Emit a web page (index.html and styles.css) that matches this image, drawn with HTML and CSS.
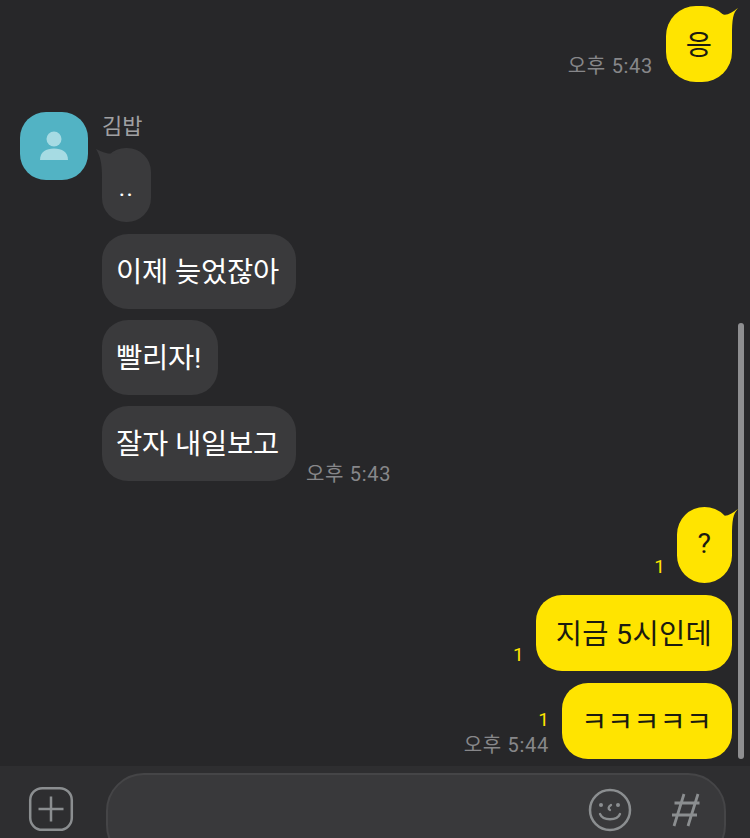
FILE: index.html
```html
<!DOCTYPE html>
<html lang="ko">
<head>
  <meta charset="UTF-8" />
  <title>Chat</title>
  <link rel="stylesheet" href="styles.css">
</head>
<body>
  <div class="chat">
    <div class="scrollbar"></div>

    <!-- my last message -->
    <div class="row mine group-first">
      <span class="time">오후 5:43</span>
      <div class="bubble yellow short tail">
        <svg class="tail-r" width="26" height="30" viewBox="0 0 26 30"><path d="M6 5C12 12 18 8 26 2C21 7 20 13 20 30L0 30Z" fill="#ffe400"/></svg>
        <span class="label">응</span>
      </div>
    </div>

    <!-- friend -->
    <div class="friend">
      <div class="avatar">
        <svg width="30" height="30" viewBox="0 0 30 30"><circle cx="15" cy="8" r="7.5" fill="#a6dbe3"/><path d="M1 29C1 21 7 17.500 15 17.500C23 17.500 29 21 29 29Z" fill="#a6dbe3"/></svg>
      </div>
      <div class="friend-msgs">
        <div class="name">김밥</div>
        <div class="bubble gray dots tail">
          <svg class="tail-l" width="22" height="30" viewBox="0 0 22 30"><path d="M22 5C14 7 8 5 0 1C4 8 6 14 6 30L22 30Z" fill="#3a3a3c"/></svg>
          <span class="label">..</span>
        </div>
        <div class="bubble gray">이제 늦었잖아</div>
        <div class="bubble gray">빨리자!</div>
        <div class="with-time">
          <div class="bubble gray">잘자 내일보고</div>
          <span class="time">오후 5:43</span>
        </div>
      </div>
    </div>

    <!-- my messages -->
    <div class="mine-group">
      <div class="row mine">
        <span class="unread">1</span>
        <div class="bubble yellow short tail">
          <svg class="tail-r" width="26" height="30" viewBox="0 0 26 30"><path d="M6 5C12 12 18 8 26 2C21 7 20 13 20 30L0 30Z" fill="#ffe400"/></svg>
          <span class="label">?</span>
        </div>
      </div>
      <div class="row mine">
        <span class="unread">1</span>
        <div class="bubble yellow">지금 5시인데</div>
      </div>
      <div class="row mine">
        <div class="meta">
          <span class="unread">1</span>
          <span class="time">오후 5:44</span>
        </div>
        <div class="bubble yellow kk">ㅋㅋㅋㅋㅋ</div>
      </div>
    </div>
  </div>

  <div class="inputbar">
    <svg class="plus" width="46" height="46" viewBox="0 0 46 46">
      <rect x="2.200" y="2.200" width="41.600" height="41.600" rx="12" fill="none" stroke="#8b8e90" stroke-width="2.500"/>
      <path d="M23 10.500V35.500M10.500 23H35.500" fill="none" stroke="#8b8e90" stroke-width="2.500"/>
    </svg>
    <div class="inputbox">
      <svg width="44" height="44" viewBox="0 0 44 44">
        <circle cx="22" cy="22" r="20" fill="none" stroke="#8b8e90" stroke-width="2.500"/>
        <circle cx="13" cy="17" r="2" fill="#8b8e90"/>
        <circle cx="30" cy="17" r="2" fill="#8b8e90"/>
        <path d="M23 17C20 19 20 21 22 22M12 26C15 33 29 33 32 26" fill="none" stroke="#8b8e90" stroke-width="2.300" stroke-linecap="round"/>
      </svg>
      <svg class="hash" width="30" height="34" viewBox="0 0 30 34">
        <path d="M13 1L3 33M27 1L17 33M3.500 10H28.500M1 22H26" fill="none" stroke="#8b8e90" stroke-width="2.800"/>
      </svg>
    </div>
  </div>
</body>
</html>
```

FILE: styles.css
```css
* {
  box-sizing: border-box;
}

html, body {
  margin: 0;
  height: 838px;
  overflow: hidden;
}

body {
  background-color: #272729;
  font-family: "Noto Sans CJK KR", "Noto Sans", sans-serif;
  color: #fff;
}

.chat {
  position: relative;
  height: 766px;
  padding: 6px 18px 0 20px;
}

.scrollbar {
  position: absolute;
  right: 6px;
  top: 323px;
  width: 6px;
  height: 436px;
  border-radius: 3px;
  background-color: #8e8e90;
}

.row {
  display: flex;
  justify-content: flex-end;
  align-items: flex-end;
}

.bubble {
  position: relative;
  height: 75px;
  padding: 0 17px 4px 14px;
  display: flex;
  align-items: center;
  justify-content: center;
  border-radius: 26px;
  font-family: Roboto, "Noto Sans CJK KR", sans-serif;
  font-size: 28.500px;
  letter-spacing: -0.2px;
  width: fit-content;
  white-space: nowrap;
}

.label {
  position: relative;
}

.yellow {
  background-color: #ffe400;
  color: #1b1b10;
  height: 76px;
  padding: 0 20px 4px;
  letter-spacing: 0.300px;
}

.gray {
  background-color: #3a3a3c;
}

.short {
  width: 66px;
  height: 76px;
  border-radius: 30px;
  padding: 0 0 4px;
}

.mine-group .short {
  width: 55px;
}

.dots {
  width: 49px;
  height: 74px;
  border-radius: 24px;
  padding: 5px 0 0;
  font-size: 24px;
  letter-spacing: 1.500px;
  margin-top: 4px;
  margin-bottom: 1px;
}

.kk {
  padding: 0 20px 4px 19px;
  letter-spacing: 0;
}

.tail-r {
  position: absolute;
  top: 0;
  right: -6px;
}

.tail-l {
  position: absolute;
  top: 0;
  left: -6px;
}

.time {
  color: #87878a;
  font-family: Roboto, "Noto Sans CJK KR", sans-serif;
  font-size: 20px;
  letter-spacing: 0.700px;
  line-height: 26px;
  white-space: nowrap;
}

.unread {
  color: #ffe400;
  font-family: Roboto, sans-serif;
  font-size: 19px;
  line-height: 24px;
}

.row .time {
  margin: 0 13px 3px 0;
}

.row > .unread {
  margin: 0 12px 4px 0;
}

.meta {
  display: flex;
  flex-direction: column;
  align-items: flex-end;
  margin: 0 13px 1px 0;
}

.meta .unread {
  margin-bottom: 0;
}

.row .meta .time {
  margin: 0;
}

.friend {
  display: flex;
  gap: 14px;
  margin-top: 30px;
}

.avatar {
  width: 68px;
  height: 68px;
  border-radius: 26px;
  background-color: #52b3c4;
  display: flex;
  align-items: center;
  justify-content: center;
}

.friend-msgs {
  display: flex;
  flex-direction: column;
  gap: 11px;
}

.name {
  color: #a0a0a2;
  font-size: 22px;
  line-height: 25px;
  margin-bottom: -4px;
}

.with-time {
  display: flex;
  align-items: flex-end;
  gap: 10px;
}

.with-time .time {
  margin-bottom: -6px;
}

.mine-group {
  display: flex;
  flex-direction: column;
  gap: 12px;
  margin-top: 26px;
}

.inputbar {
  height: 72px;
  background-color: #2e2e30;
  display: flex;
  align-items: flex-start;
  padding: 7px 24px 0 28px;
  gap: 32px;
  overflow: hidden;
}

.plus {
  margin-top: 13px;
  flex: none;
}

.inputbox {
  flex: 1;
  height: 90px;
  border: 2px solid #454547;
  border-radius: 38px;
  background-color: #39393b;
  display: flex;
  justify-content: flex-end;
  align-items: flex-start;
  gap: 39px;
  padding: 13px 23px 0 0;
}

.hash {
  margin-top: 5px;
}
```
